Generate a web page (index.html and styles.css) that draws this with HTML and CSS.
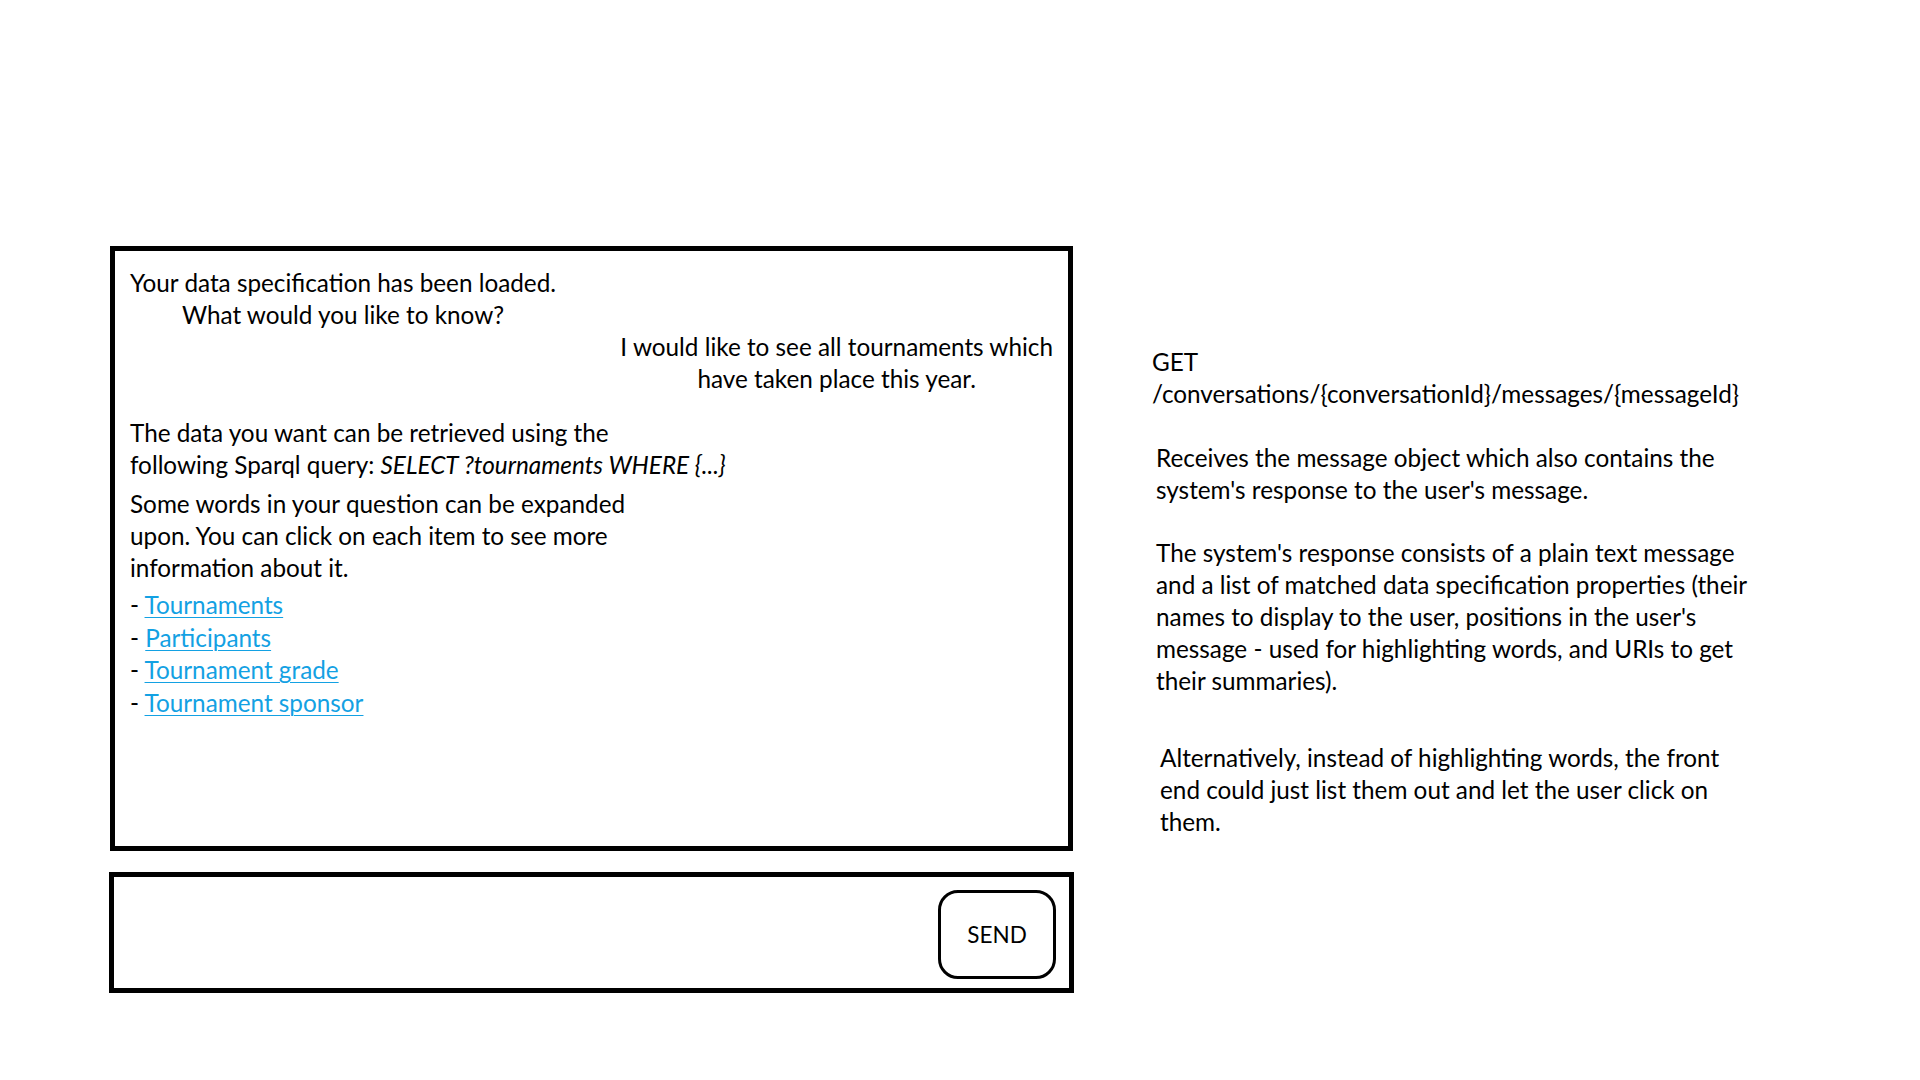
FILE: index.html
```html
<!DOCTYPE html>
<html lang="en">
<head>
<meta charset="utf-8">
<title>Chat mockup</title>
<link rel="stylesheet" href="styles.css">
</head>
<body>
<div class="page">
  <div class="chat-col">
    <div class="chat-log">
      <div class="msg msg-system msg-centered">Your data specification has been loaded.<br>What would you like to know?</div>
      <div class="msg msg-user">I would like to see all tournaments which<br>have taken place this year.</div>
      <div class="msg msg-system msg-reply">The data you want can be retrieved using the<br>following Sparql query: <em>SELECT ?tournaments WHERE {...}</em></div>
      <div class="msg msg-system msg-expand">Some words in your question can be expanded<br>upon. You can click on each item to see more<br>information about it.</div>
      <ul class="prop-list">
        <li>- <a href="#">Tournaments</a></li>
        <li>- <a href="#">Participants</a></li>
        <li>- <a href="#">Tournament grade</a></li>
        <li>- <a href="#">Tournament sponsor</a></li>
      </ul>
    </div>
    <div class="composer">
      <button class="send-btn" type="button">SEND</button>
    </div>
  </div>
  <div class="notes">
    <p class="note note-endpoint">GET<br>/conversations/{conversationId}/messages/{messageId}</p>
    <p class="note note-a">Receives the message object which also contains the<br>system's response to the user's message.</p>
    <p class="note note-b">The system's response consists of a plain text message<br>and a list of matched data specification properties (their<br>names to display to the user, positions in the user's<br>message - used for highlighting words, and URIs to get<br>their summaries).</p>
    <p class="note note-c">Alternatively, instead of highlighting words, the front<br>end could just list them out and let the user click on<br>them.</p>
  </div>
</div>
</body>
</html>
```
FILE: styles.css
```css
html, body {
  margin: 0;
  padding: 0;
  background: #ffffff;
}
body {
  font-family: "Lato", "Open Sans", sans-serif;
  font-size: 24.3px;
  line-height: 32px;
  color: #000000;
}
.page {
  display: flex;
  align-items: flex-start;
  padding: 246px 0 0 110px;
  gap: 78px;
}
.chat-col {
  display: flex;
  flex-direction: column;
  width: 964px;
}
.chat-log {
  box-sizing: border-box;
  width: 963px;
  height: 605px;
  border: 5px solid #000;
  padding: 16px 15px;
  display: flex;
  flex-direction: column;
  align-items: flex-start;
}
.msg {
  white-space: nowrap;
}
.msg-centered {
  text-align: center;
}
.msg-user {
  align-self: flex-end;
  text-align: center;
}
.msg-reply {
  margin-top: 22px;
}
.msg-expand {
  margin-top: 7px;
}
.prop-list {
  list-style: none;
  margin: 5px 0 0 0;
  padding: 0;
  line-height: 32.5px;
}
.prop-list a {
  color: #13a1e3;
  text-decoration: underline;
  text-decoration-thickness: 1px;
  text-underline-offset: 3px;
}
.composer {
  box-sizing: border-box;
  width: 965px;
  height: 121px;
  margin: 21px 0 0 -1px;
  border: 5px solid #000;
  padding: 13px 13px 9px;
  display: flex;
  justify-content: flex-end;
  align-items: flex-start;
}
.send-btn {
  box-sizing: border-box;
  width: 118px;
  height: 89px;
  border: 3px solid #000;
  border-radius: 20px;
  background: #fff;
  font-family: "Lato", "Open Sans", sans-serif;
  font-size: 22.5px;
  color: #000;
  padding: 0;
  cursor: pointer;
}
.notes {
  padding-top: 100px;
  white-space: nowrap;
}
.note {
  margin: 0;
}
.note-a {
  margin: 32px 0 0 4px;
}
.note-b {
  margin: 31px 0 0 4px;
}
.note-c {
  margin: 45px 0 0 8px;
}
```
